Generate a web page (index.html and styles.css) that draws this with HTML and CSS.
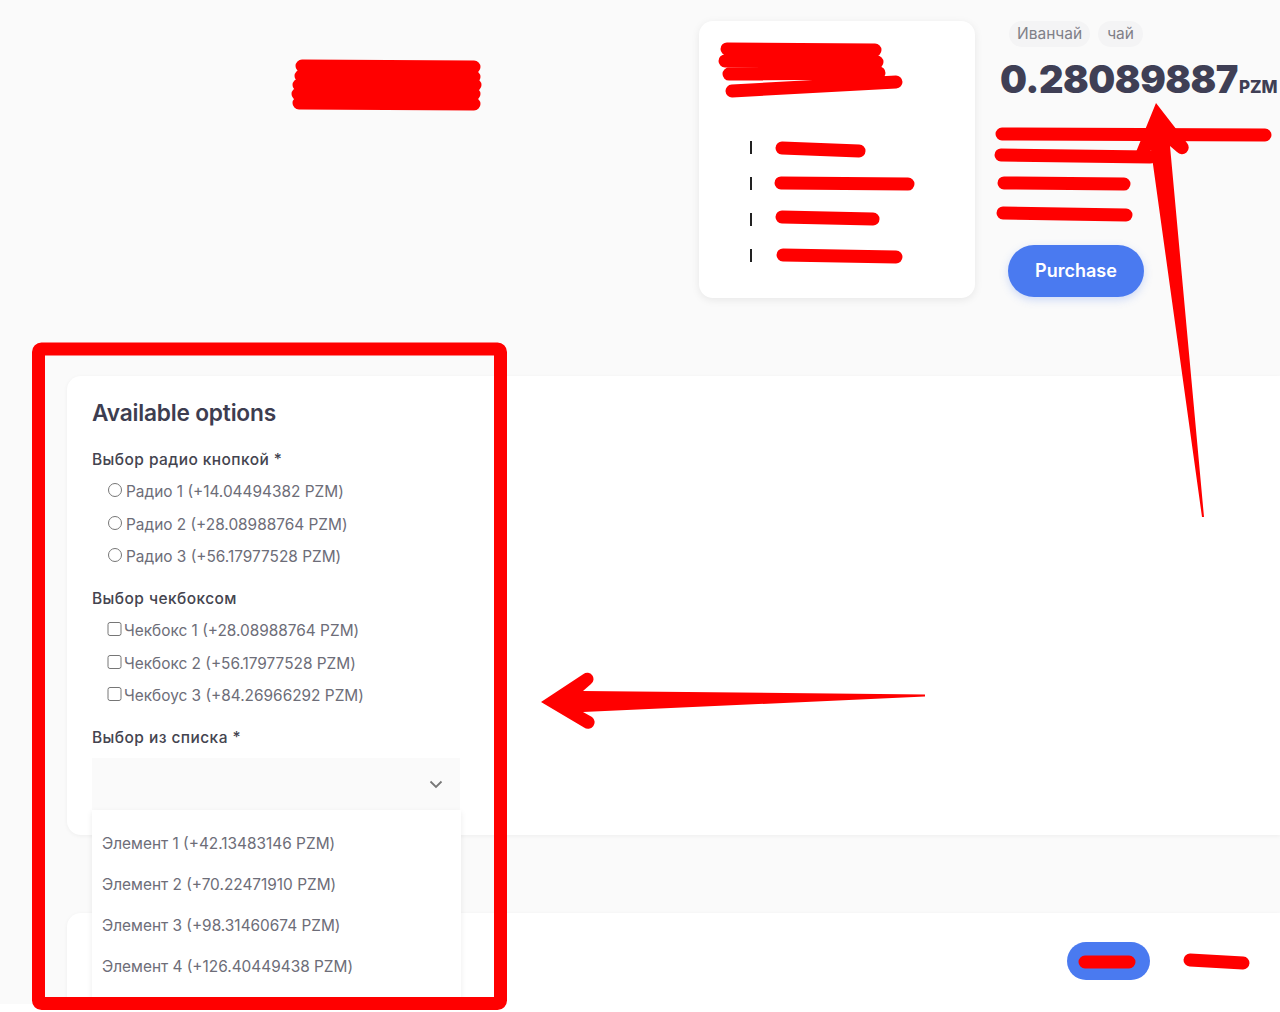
FILE: index.html
```html
<!DOCTYPE html>
<html lang="en">
    <head>
        <meta charset="utf-8">
        <link rel="stylesheet" href="styles.css">
    </head>
    <body>
        <div class="page">
            <div class="top">
                <div class="details">
                    <ul class="props">
                        <li><i></i></li>
                        <li><i></i></li>
                        <li><i></i></li>
                        <li><i></i></li>
                    </ul>
                </div>
                <div class="info">
                    <div class="tags">
                        <span class="tag">Иванчай</span>
                        <span class="tag">чай</span>
                    </div>
                    <div class="price">0.28089887<small>PZM</small></div>
                    <a class="btn buy" href="#">Purchase</a>
                </div>
            </div>

            <div class="panel options">
                <h2>Available options</h2>

                <div class="label">Выбор радио кнопкой *</div>
                <label class="opt"><input type="radio" name="r">Радио 1 (+14.04494382 PZM)</label>
                <label class="opt"><input type="radio" name="r">Радио 2 (+28.08988764 PZM)</label>
                <label class="opt"><input type="radio" name="r">Радио 3 (+56.17977528 PZM)</label>

                <div class="label">Выбор чекбоксом</div>
                <label class="opt"><input type="checkbox">Чекбокс 1 (+28.08988764 PZM)</label>
                <label class="opt"><input type="checkbox">Чекбокс 2 (+56.17977528 PZM)</label>
                <label class="opt"><input type="checkbox">Чекбоус 3 (+84.26966292 PZM)</label>

                <div class="label">Выбор из списка *</div>
                <div class="select">
                    <svg width="14" height="9" viewBox="0 0 14 9"><path d="M1.5 1.5 7 7l5.500-5.500" fill="none" stroke="#777" stroke-width="1.800"/></svg>
                    <ul class="dropdown">
                        <li>Элемент 1 (+42.13483146 PZM)</li>
                        <li>Элемент 2 (+70.22471910 PZM)</li>
                        <li>Элемент 3 (+98.31460674 PZM)</li>
                        <li>Элемент 4 (+126.40449438 PZM)</li>
                    </ul>
                </div>
            </div>

            <div class="panel bottom">
                <a class="btn small" href="#"></a>
            </div>
        </div>

        <!-- red marks drawn on top of the screenshot -->
        <svg class="marks" width="1280" height="1012" viewBox="0 0 1280 1012">
            <g fill="none" stroke="#f00" stroke-linecap="round" stroke-width="13">
                <path d="M302 66 474 67M301 76 474 77M299 85 475 85M298 94 474 94M299 103 474 104"/>
                <path d="M727 49 875 50M725 61 877 62M729 74 879 73M732 91 896 82"/>
                <path d="M782 148 859 151M781 183 908 184M782 217 873 219M783 255 896 257"/>
                <path d="M1002 134 1265 135M1001 155 1150 157M1004 183 1124 184M1003 213 1126 215"/>
                <path d="M1085 962 1129 962M1190 960 1243 963"/>
            </g>
            <rect x="38.500" y="349" width="462" height="654.500" rx="3" fill="none" stroke="#f00" stroke-width="13"/>
            <path d="M1156 103 1187 143A6 6 0 0 1 1177 152L1170 146 1204 517H1202L1151 150 1147 158A6 6 0 0 1 1136 152Z" fill="#f00"/>
            <path d="M541 702 583.500 674A6 6 0 0 1 591 684L583 691 925 694.500V696.500L583 712 592 717A6 6 0 0 1 584 727.500Z" fill="#f00"/>
        </svg>
    </body>
</html>
```
FILE: styles.css
```css
* {
    margin: 0;
    padding: 0;
    box-sizing: border-box;
}
ul {
    list-style: none;
}
body {
    width: 1280px;
    height: 1012px;
    overflow: hidden;
    position: relative;
    background-color: #fff;
    font-family: Inter, "Noto Sans", sans-serif;
    color: #3d3d50;
}
.page {
    height: 1004px;
    background-color: #fafafa;
    padding-top: 21px;
    overflow: hidden;
}
.top {
    display: flex;
    padding-left: 699px;
    height: 355px;
}
.details {
    flex: none;
    width: 276px;
    height: 277px;
    background-color: #fff;
    border-radius: 14px;
    box-shadow: 0 2px 8px rgba(0, 0, 0, .08);
    padding-top: 109px;
}
.props li {
    height: 36px;
    padding: 11px 0 0 51px;
}
.props i {
    display: block;
    width: 2px;
    height: 13px;
    background-color: #222;
}
.info {
    flex: none;
    width: 290px;
    margin-left: 25px;
}
.tags {
    display: flex;
    gap: 8px;
    margin-left: 9px;
}
.tag {
    height: 26px;
    line-height: 25px;
    padding: 0 8px;
    border-radius: 13px;
    background-color: #f4f4f5;
    color: #808088;
    font-size: 15.500px;
}
.tag:last-child {
    padding: 0 9px;
}
.price {
    margin-top: 9px;
    font-size: 38px;
    line-height: 46px;
    font-weight: 900;
    letter-spacing: -.5px;
    white-space: nowrap;
    color: #3f3f55;
}
.price small {
    font-size: 17px;
    font-weight: 800;
    letter-spacing: 0;
    margin-left: 1px;
}
.btn {
    display: block;
    background-color: #4a7af0;
    text-decoration: none;
    color: #fff;
    text-align: center;
}
.buy {
    width: 136px;
    height: 52px;
    margin: 135px 0 0 8px;
    line-height: 51px;
    border-radius: 26px;
    font-size: 18px;
    font-weight: 600;
    box-shadow: 0 3px 8px rgba(74, 122, 240, .25);
}
.panel {
    margin-left: 67px;
    background-color: #fff;
    border-radius: 14px 0 0 14px;
    box-shadow: 0 1px 4px rgba(0, 0, 0, .05);
}
.options {
    position: relative;
    z-index: 1;
    height: 459px;
    padding: 22px 25px;
}
h2 {
    font-size: 22.700px;
    line-height: 30px;
    font-weight: 600;
    letter-spacing: -.2px;
    color: #3d3d50;
    margin-bottom: 22px;
}
.label {
    font-size: 15.500px;
    line-height: 20px;
    font-weight: 500;
    letter-spacing: .43px;
    color: #44444f;
    margin: 0 0 5.500px;
}
.opt {
    display: flex;
    align-items: center;
    height: 32.500px;
    padding-left: 16px;
    font-size: 15.400px;
    color: #6d6d78;
    white-space: nowrap;
}
.opt input {
    width: 14px;
    height: 14px;
    margin: 0 4px 3px 0;
    flex: none;
}
.opt input[type=checkbox] {
    margin: 0 2px 3px -1px;
    width: 15px;
}
.opt + .label {
    margin-top: 16px;
}
.select {
    position: relative;
    width: 368px;
    height: 52px;
    background-color: #fafafa;
    margin-top: 9.500px;
}
.select svg {
    position: absolute;
    right: 17px;
    top: 22px;
}
.dropdown {
    position: absolute;
    top: 52px;
    left: 0;
    width: 369px;
    height: 200px;
    padding-top: 13px;
    background-color: #fff;
    box-shadow: 0 2px 6px rgba(0, 0, 0, .08);
}
.dropdown li {
    height: 41.300px;
    line-height: 41px;
    padding-left: 10px;
    font-size: 15.400px;
    color: #6d6d78;
    white-space: nowrap;
}
.bottom {
    position: relative;
    display: flex;
    margin-top: 78px;
    height: 120px;
    padding: 29px 130px 0 0;
    justify-content: flex-end;
}
/* last bit of hidden text that shows beside the dropdown */
.bottom::before {
    content: "";
    position: absolute;
    left: 25px;
    top: 44px;
    width: 1px;
    height: 2px;
    background-color: #999;
}
.small {
    width: 83px;
    height: 38px;
    border-radius: 19px;
}
.marks {
    position: absolute;
    left: 0;
    top: 0;
    z-index: 5;
}
```
